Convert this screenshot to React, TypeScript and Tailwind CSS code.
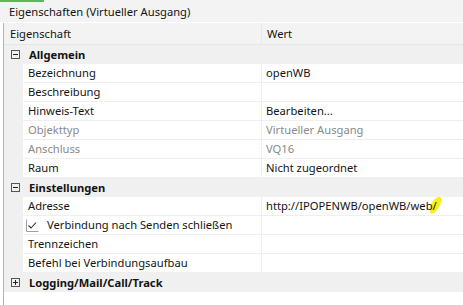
import React from 'react';

type Row =
  | { kind: 'group'; label: string; open: boolean }
  | { kind: 'prop'; label: string; value?: string; muted?: boolean; check?: boolean; mark?: boolean };

const rows: Row[] = [
  { kind: 'group', label: 'Allgemein', open: true },
  { kind: 'prop', label: 'Bezeichnung', value: 'openWB' },
  { kind: 'prop', label: 'Beschreibung' },
  { kind: 'prop', label: 'Hinweis-Text', value: 'Bearbeiten...' },
  { kind: 'prop', label: 'Objekttyp', value: 'Virtueller Ausgang', muted: true },
  { kind: 'prop', label: 'Anschluss', value: 'VQ16', muted: true },
  { kind: 'prop', label: 'Raum', value: 'Nicht zugeordnet' },
  { kind: 'group', label: 'Einstellungen', open: true },
  { kind: 'prop', label: 'Adresse', value: 'http://IPOPENWB/openWB/web/', mark: true },
  { kind: 'prop', label: 'Verbindung nach Senden schließen', check: true },
  { kind: 'prop', label: 'Trennzeichen' },
  { kind: 'prop', label: 'Befehl bei Verbindungsaufbau' },
  { kind: 'group', label: 'Logging/Mail/Call/Track', open: false },
];

function ToggleBox({ open }: { open: boolean }) {
  return (
    <svg width="9" height="9" viewBox="0 0 9 9" className="shrink-0">
      <rect x="0.5" y="0.5" width="8" height="8" fill="#f0f0f0" stroke="#555" />
      <line x1="2" y1="4.5" x2="7" y2="4.5" stroke="#222" />
      {!open && <line x1="4.5" y1="2" x2="4.5" y2="7" stroke="#222" />}
    </svg>
  );
}

export default function App() {
  return (
    <div
      className="w-[463px] h-[305px] bg-white relative overflow-hidden flex flex-col text-[11.2px] text-[#141414]"
      style={{ fontFamily: '"Noto Sans", "Liberation Sans", sans-serif' }}
    >
      {/* tab accent */}
      <div className="absolute top-0 left-0 w-[44px] h-[2px] bg-[#5cb85c]" />

      {/* title */}
      <div className="h-[22px] bg-[#f3f3f3] pl-[9px] pt-[2px] flex items-center leading-none shrink-0">
        Eigenschaften (Virtueller Ausgang)
      </div>
      <div className="h-px bg-white shrink-0" />

      <div className="flex-1 flex flex-col ml-[3px] border-l border-[#b4b4b4]">
        {/* header */}
        <div className="h-[22px] flex bg-[#f3f3f3] border-b border-[#e6e6e6] shrink-0 leading-none">
          <div className="w-[258px] border-r border-[#e9e9e9] pl-[6px] flex items-center">Eigenschaft</div>
          <div className="flex-1 pl-[5px] flex items-center">Wert</div>
        </div>

        {rows.map((r) =>
          r.kind === 'group' ? (
            <div key={r.label} className="h-[19px] flex items-center bg-[#f0f0f0] leading-none">
              <div className="w-[24px] pl-[7px] flex items-center">
                <ToggleBox open={r.open} />
              </div>
              <span className="font-bold pl-px">{r.label}</span>
            </div>
          ) : (
            <div key={r.label} className="h-[19px] flex leading-none">
              <div className="w-[19px] bg-[#f0f0f0] shrink-0" />
              <div className="w-[239px] border-r border-b border-[#efefef] flex items-center pl-[5px] whitespace-nowrap overflow-hidden">
                {r.check && (
                  <svg width="13" height="13" viewBox="0 0 13 13" className="shrink-0 mr-[8px] -ml-[2px]">
                    <path d="M0.5 0.5 V12.5 H12.5" fill="none" stroke="#a0a0a0" />
                    <path d="M2.5 6.5 L5 9 L10 3.5" fill="none" stroke="#333" strokeWidth="1.1" />
                  </svg>
                )}
                <span className={r.muted ? 'text-[#8a8a8a]' : ''}>{r.label}</span>
              </div>
              <div className="flex-1 border-b border-[#efefef] flex items-center pl-[4px] whitespace-nowrap">
                {r.value && (
                  <span className={`relative ${r.muted ? 'text-[#8a8a8a]' : ''}`}>
                    {r.mark && (
                      <svg width="15" height="18" viewBox="0 0 15 18" className="absolute -right-[6px] -top-[4px]">
                        <path d="M2 16 C0 12 4 4 9 1.5 C13 0 15 3 13 7 C11 11 9 15 6 17 C4 18 2.5 17.5 2 16 Z" fill="#f5f21a" />
                      </svg>
                    )}
                    <span className="relative">{r.value}</span>
                  </span>
                )}
              </div>
            </div>
          )
        )}
        <div className="flex-1" />
      </div>
    </div>
  );
}
